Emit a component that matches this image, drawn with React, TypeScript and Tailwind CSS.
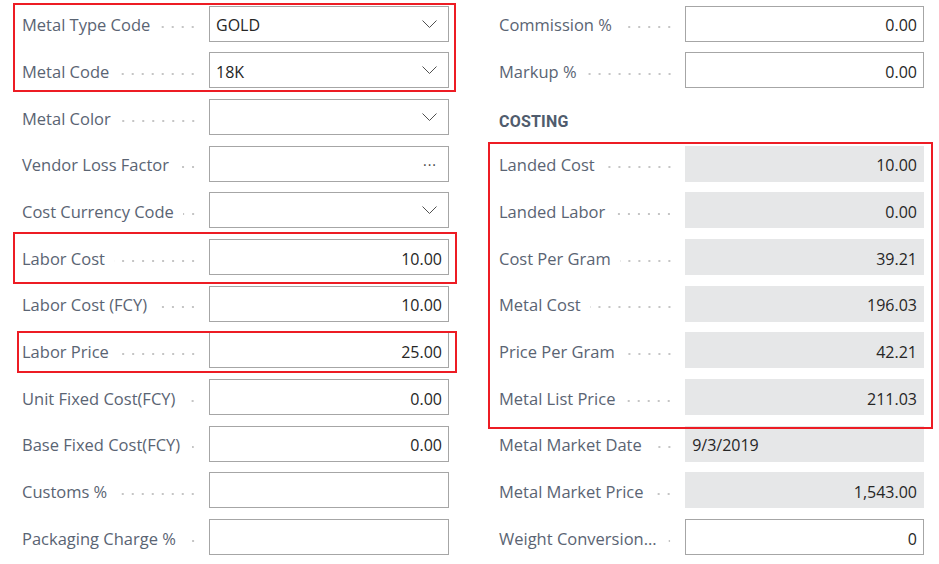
type Kind = 'select' | 'lookup' | 'text' | 'ro' | 'head';

interface Field {
  label: string;
  value?: string;
  kind: Kind;
  left?: boolean;
}

const leftFields: Field[] = [
  { label: 'Metal Type Code', value: 'GOLD', kind: 'select' },
  { label: 'Metal Code', value: '18K', kind: 'select' },
  { label: 'Metal Color', kind: 'select' },
  { label: 'Vendor Loss Factor', kind: 'lookup' },
  { label: 'Cost Currency Code', kind: 'select' },
  { label: 'Labor Cost', value: '10.00', kind: 'text' },
  { label: 'Labor Cost (FCY)', value: '10.00', kind: 'text' },
  { label: 'Labor Price', value: '25.00', kind: 'text' },
  { label: 'Unit Fixed Cost(FCY)', value: '0.00', kind: 'text' },
  { label: 'Base Fixed Cost(FCY)', value: '0.00', kind: 'text' },
  { label: 'Customs %', kind: 'text' },
  { label: 'Packaging Charge %', kind: 'text' },
];

const rightFields: Field[] = [
  { label: 'Commission %', value: '0.00', kind: 'text' },
  { label: 'Markup %', value: '0.00', kind: 'text' },
  { label: 'COSTING', kind: 'head' },
  { label: 'Landed Cost', value: '10.00', kind: 'ro' },
  { label: 'Landed Labor', value: '0.00', kind: 'ro' },
  { label: 'Cost Per Gram', value: '39.21', kind: 'ro' },
  { label: 'Metal Cost', value: '196.03', kind: 'ro' },
  { label: 'Price Per Gram', value: '42.21', kind: 'ro' },
  { label: 'Metal List Price', value: '211.03', kind: 'ro' },
  { label: 'Metal Market Date', value: '9/3/2019', kind: 'ro', left: true },
  { label: 'Metal Market Price', value: '1,543.00', kind: 'ro' },
  { label: 'Weight Conversion...', value: '0', kind: 'text' },
];

function Chevron() {
  return (
    <svg width="15" height="8" viewBox="0 0 15 8" className="mr-[5px]">
      <polyline points="0.5,0.5 7.5,7.5 14.5,0.5" fill="none" stroke="#505050" strokeWidth="1" />
    </svg>
  );
}

function Row({ f }: { f: Field }) {
  if (f.kind === 'head') {
    return (
      <div className="h-[46.67px] flex items-end pb-[6px]">
        <span className="font-['Roboto',sans-serif] text-[16px] font-bold tracking-[0.2px] text-[#505c6d]">{f.label}</span>
      </div>
    );
  }
  const selectLike = f.kind === 'select' || f.kind === 'lookup';
  return (
    <div className="h-[46.67px] flex items-center pt-[1px]">
      <div className="w-[187px] flex items-center pr-[11px] h-full">
        <span className="text-[16.5px] text-[#5a6473] whitespace-nowrap mt-[4px]">{f.label}</span>
        <span className="flex-1 ml-[9px] h-[10px] mt-[7px] bg-[radial-gradient(circle,#c4c4c4_0.7px,transparent_1.2px)] bg-[length:10px_10px] bg-repeat-x bg-right" />
      </div>
      <div
        className={
          f.kind === 'ro'
            ? 'w-[240px] h-[36px] bg-[#e6e7e8] flex items-center px-[7px] text-[16px] text-[#262626]'
            : 'w-[240px] h-[36px] border border-[#a6a6a6] bg-white flex items-center px-[6px] text-[16px] text-[#262626]'
        }
      >
        {selectLike ? (
          <>
            <span className="flex-1 mt-[3px]">{f.value}</span>
            {f.kind === 'select' ? (
              <Chevron />
            ) : (
              <span className="text-[#444] text-[14px] tracking-[1px] mr-[5px] mt-[1px]">···</span>
            )}
          </>
        ) : (
          <span className={f.left ? 'flex-1 text-left mt-[3px]' : 'flex-1 text-right mt-[3px]'}>{f.value}</span>
        )}
      </div>
    </div>
  );
}

export default function App() {
  return (
    <div className="relative w-[939px] h-[564px] bg-white overflow-hidden font-['Open_Sans',sans-serif]">
      <div className="flex pl-[22px]">
        <div className="w-[477px] flex flex-col">
          {leftFields.map(f => <Row key={f.label} f={f} />)}
        </div>
        <div className="w-[426px] flex flex-col -ml-[1px] pl-[1px]">
          {rightFields.map(f => <Row key={f.label} f={f} />)}
        </div>
      </div>

      {/* red highlight annotations */}
      <div className="absolute left-[13px] top-[3px] w-[443px] h-[89px] border-2 border-[#ed1c24]" />
      <div className="absolute left-[13px] top-[232px] w-[444px] h-[52px] border-2 border-[#ed1c24]" />
      <div className="absolute left-[17px] top-[331px] w-[440px] h-[42px] border-2 border-[#ed1c24]" />
      <div className="absolute left-[488px] top-[142px] w-[445px] h-[287px] border-2 border-[#ed1c24]" />
    </div>
  );
}
